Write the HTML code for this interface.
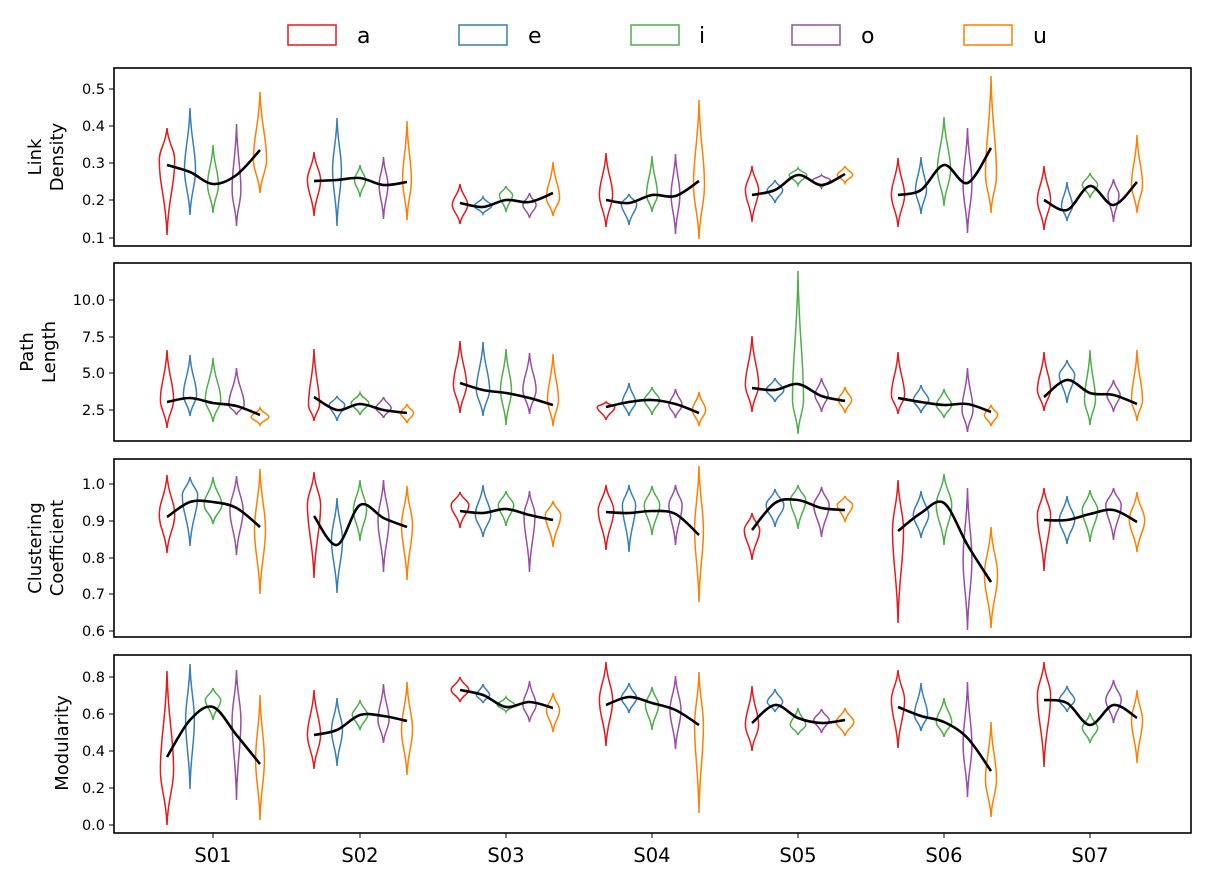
<!DOCTYPE html>
<html><head><meta charset="utf-8"><style>
html,body{margin:0;padding:0;background:#fff}
svg{display:block;font-family:"DejaVu Sans","Liberation Sans",sans-serif}
</style></head><body>
<svg id="s" width="1216" height="882" xmlns="http://www.w3.org/2000/svg">
<rect width="1216" height="882" fill="#fff"/>
<g id="leg" font-size="22" fill="#000">
<rect x="288" y="25" width="48" height="20" fill="none" stroke="#e41a1c" stroke-width="1.5"/><text x="357" y="43">a</text>
<rect x="459" y="25" width="48" height="20" fill="none" stroke="#377eb8" stroke-width="1.5"/><text x="528" y="43">e</text>
<rect x="631" y="25" width="48" height="20" fill="none" stroke="#4daf4a" stroke-width="1.5"/><text x="699" y="43">i</text>
<rect x="792" y="25" width="48" height="20" fill="none" stroke="#984ea3" stroke-width="1.5"/><text x="861" y="43">o</text>
<rect x="964" y="25" width="48" height="20" fill="none" stroke="#ff7f00" stroke-width="1.5"/><text x="1033" y="43">u</text>
</g>
<g font-size="18" text-anchor="middle">
<text transform="translate(45,157) rotate(-90)"><tspan x="0" y="-4">Link</tspan><tspan x="0" y="18">Density</tspan></text>
<text transform="translate(37,352) rotate(-90)"><tspan x="0" y="-4">Path</tspan><tspan x="0" y="18">Length</tspan></text>
<text transform="translate(45,548) rotate(-90)"><tspan x="0" y="-4">Clustering</tspan><tspan x="0" y="18">Coefficient</tspan></text>
<text transform="translate(68,743) rotate(-90)">Modularity</text>
</g>
<g id="g"></g>
</svg>
<script>
var C=["#e41a1c","#377eb8","#4daf4a","#984ea3","#ff7f00"];
var cx=[213,360,506,652,798,944,1090];
var off=[-46,-23,0,23.5,47];
var panels=[
{y0:68,y1:246,ticks:[[89,"0.5"],[126,"0.4"],[163,"0.3"],[200,"0.2"],[238,"0.1"]],
v:[[[128,235,160,7],[108,215,170,5],[145,213,185,5],[124,226,190,4],[92,193,160,6]],
[[152,216,180,6],[118,226,170,4],[165,197,180,5],[157,219,185,4],[121,220,180,4]],
[[184,224,205,7],[197,214,206,8],[186,212,195,6],[193,218,205,6],[162,216,198,6]],
[[153,227,195,6],[194,225,204,7],[156,212,195,5],[154,234,195,4],[100,239,185,5]],
[[166,222,190,6],[180,203,190,7],[168,185,175,8],[175,188,180,8],[166,183,175,7]],
[[158,227,195,6],[157,214,190,5],[117,206,170,6],[128,233,185,4],[76,213,175,5]],
[[166,230,200,6],[182,221,206,5],[173,198,185,7],[179,222,195,5],[135,213,185,5]]],
c:[[165,172,184,175,150],[181,180,178,185,182],[203,207,200,202,193],[200,203,195,196,181],[195,190,175,185,174],[195,190,165,183,148],[200,210,186,205,182]]},
{y0:263,y1:441,ticks:[[300,"10.0"],[337,"7.5"],[373,"5.0"],[410,"2.5"]],
v:[[[350,428,400,6],[355,416,395,6],[358,422,400,7],[368,415,405,7],[408,425,417,8]],
[[349,421,405,5],[396,421,405,7],[393,415,403,8],[397,418,408,7],[404,423,413,6]],
[[341,413,385,6],[342,416,390,6],[349,425,390,5],[353,414,390,6],[354,426,400,5]],
[[402,420,407,8],[383,416,402,6],[387,415,400,7],[389,418,405,6],[392,426,410,6]],
[[336,412,385,6],[378,402,390,8],[271,434,400,5],[378,412,395,6],[387,413,400,6]],
[[352,414,395,6],[385,413,400,7],[389,418,405,7],[368,432,410,5],[405,426,415,6]],
[[352,411,390,6],[360,403,375,7],[350,425,400,5],[380,412,395,6],[350,421,400,5]]],
c:[[402,398,403,406,415],[397,410,404,410,413],[383,390,393,398,405],[407,402,400,404,413],[388,390,384,396,401],[398,402,405,404,412],[397,380,393,395,404]]},
{y0:459,y1:637,ticks:[[484,"1.0"],[521,"0.9"],[558,"0.8"],[594,"0.7"],[631,"0.6"]],
v:[[[475,553,515,7],[477,546,495,7],[477,524,505,8],[476,555,510,6],[469,594,530,5]],
[[472,578,505,6],[498,593,540,5],[480,541,510,6],[480,572,520,5],[486,580,525,5]],
[[492,528,505,8],[485,537,515,7],[491,526,505,7],[491,572,515,5],[501,547,515,7]],
[[485,550,510,7],[485,552,505,6],[486,535,505,7],[485,545,505,6],[466,602,530,4]],
[[513,560,530,7],[489,527,505,8],[485,529,500,7],[487,537,505,7],[496,522,505,7]],
[[480,623,530,5],[491,538,515,7],[474,545,505,7],[488,630,560,4],[527,628,575,6]],
[[488,571,515,6],[496,544,520,7],[490,542,510,7],[488,540,505,7],[492,552,520,7]]],
c:[[517,502,502,508,527],[516,545,505,518,527],[511,513,509,515,520],[512,513,511,514,535],[530,503,500,508,510],[531,513,503,545,582],[520,520,514,510,522]]},
{y0:655,y1:833,ticks:[[677,"0.8"],[714,"0.6"],[751,"0.4"],[788,"0.2"],[825,"0.0"]],
v:[[[671,825,770,6],[664,789,720,4],[688,720,700,7],[670,800,720,4],[695,820,760,4]],
[[690,769,735,6],[698,766,730,5],[700,730,715,7],[684,743,720,5],[682,775,730,5]],
[[677,702,690,8],[684,703,695,6],[697,712,705,8],[681,722,705,6],[693,732,710,6]],
[[662,746,700,6],[683,713,698,7],[687,730,705,6],[676,749,710,5],[672,813,725,4]],
[[686,751,725,6],[689,712,702,7],[708,735,725,7],[709,733,720,7],[708,736,722,8]],
[[670,748,700,6],[683,731,715,6],[698,737,722,7],[682,797,745,4],[722,817,780,5]],
[[662,767,695,6],[686,712,700,7],[713,743,728,7],[680,723,700,7],[690,763,720,5]]],
c:[[757,720,707,735,764],[735,730,715,716,721],[690,695,707,702,708],[705,697,703,710,725],[723,705,718,723,720],[707,716,722,738,771],[700,703,725,705,718]]}
];
var h="";
function vio(x,t,b,m,w){
 var a=m-(m-t)*0.35,c=m+(b-m)*0.35;
 return "M"+x+","+t+" C"+(x+w*0.15)+","+((t+m)/2)+" "+(x+w)+","+a+" "+(x+w)+","+m+
 " C"+(x+w)+","+c+" "+(x+w*0.15)+","+((m+b)/2)+" "+x+","+b+
 " C"+(x-w*0.15)+","+((m+b)/2)+" "+(x-w)+","+c+" "+(x-w)+","+m+
 " C"+(x-w)+","+a+" "+(x-w*0.15)+","+((t+m)/2)+" "+x+","+t+"Z";
}
function curve(xs,ys){
 var d="M"+xs[0]+","+ys[0];
 for(var i=0;i<xs.length-1;i++){
  var p0=i?i-1:0,p3=i+2<xs.length?i+2:i+1;
  var c1x=xs[i]+(xs[i+1]-xs[p0])/6,c1y=ys[i]+(ys[i+1]-ys[p0])/6;
  var c2x=xs[i+1]-(xs[p3]-xs[i])/6,c2y=ys[i+1]-(ys[p3]-ys[i])/6;
  d+=" C"+c1x+","+c1y+" "+c2x+","+c2y+" "+xs[i+1]+","+ys[i+1];
 }
 return d;
}
panels.forEach(function(p,pi){
 p.ticks.forEach(function(t){
  h+='<line x1="109" y1="'+t[0]+'" x2="114" y2="'+t[0]+'" stroke="#000" stroke-width="1"/>';
  h+='<text x="105" y="'+(t[0]+5)+'" font-size="14.5" text-anchor="end">'+t[1]+'</text>';
 });
 for(var g=0;g<7;g++){
  var xs=[];
  for(var k=0;k<5;k++){
   var v=p.v[g][k],x=cx[g]+off[k];xs.push(x);
   h+='<path d="'+vio(x,v[0],v[1],v[2],v[3]*1.1)+'" fill="none" stroke="'+C[k]+'" stroke-width="1.5"/>';
  }
  h+='<path d="'+curve(xs,p.c[g])+'" fill="none" stroke="#000" stroke-width="2.6"/>';
 }
 h+='<rect x="114" y="'+p.y0+'" width="1077" height="'+(p.y1-p.y0)+'" fill="none" stroke="#000" stroke-width="1.6"/>';
});
cx.forEach(function(x,i){
 h+='<line x1="'+x+'" y1="833" x2="'+x+'" y2="838" stroke="#000"/>';
 h+='<text x="'+x+'" y="862" font-size="19.5" text-anchor="middle">S0'+(i+1)+'</text>';
});
document.getElementById("g").innerHTML=h;
</script>
</body></html>
